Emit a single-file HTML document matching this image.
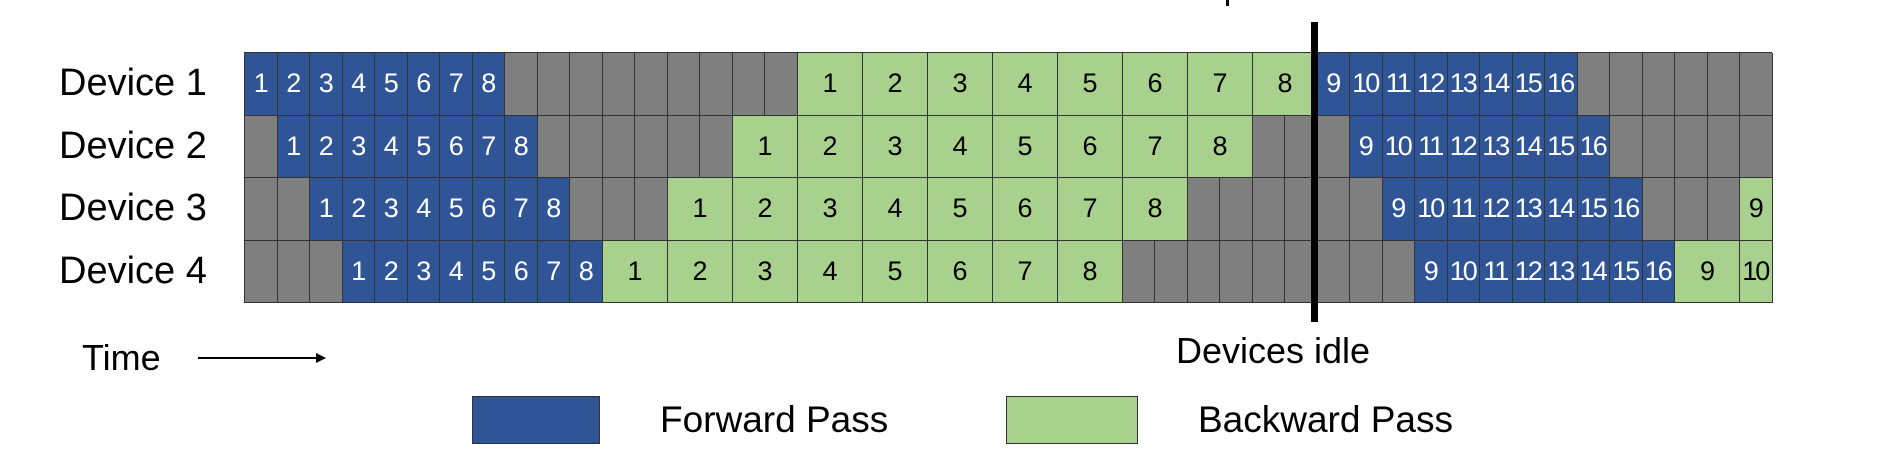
<!DOCTYPE html>
<html><head><meta charset="utf-8"><style>
body{margin:0;width:1882px;height:470px;background:#fff;position:relative;overflow:hidden;font-family:"Liberation Sans",sans-serif}
.grid{position:absolute;left:244px;top:52px;width:1528px;border-left:1px solid #333;border-top:1px solid #333;box-sizing:border-box}
.row{display:flex;height:62.5px}
.row div{box-sizing:border-box;border-right:1px solid #333;border-bottom:1px solid #333;height:62.5px;width:32.5px;flex:none;display:flex;align-items:center;justify-content:center;font-size:27px;letter-spacing:-2px;text-indent:-1px}
.row div::first-line{}
.row .x{background:#7f7f7f}
.row .b{background:#2f5597;color:#fff}
.row .g{background:#a9d18e;color:#000;width:65px}
.row .s{background:#a9d18e;color:#000}
.lbl{position:absolute;left:59px;font-size:38px;line-height:40px}
.t{position:absolute;font-size:36px;line-height:40px;white-space:nowrap}
</style></head><body>
<div class="lbl" style="top:63px">Device 1</div>
<div class="lbl" style="top:126px">Device 2</div>
<div class="lbl" style="top:188px">Device 3</div>
<div class="lbl" style="top:251px">Device 4</div>
<div class="grid">
<div class="row"><div class="b">1</div><div class="b">2</div><div class="b">3</div><div class="b">4</div><div class="b">5</div><div class="b">6</div><div class="b">7</div><div class="b">8</div><div class="x"></div><div class="x"></div><div class="x"></div><div class="x"></div><div class="x"></div><div class="x"></div><div class="x"></div><div class="x"></div><div class="x"></div><div class="g">1</div><div class="g">2</div><div class="g">3</div><div class="g">4</div><div class="g">5</div><div class="g">6</div><div class="g">7</div><div class="g">8</div><div class="b">9</div><div class="b">10</div><div class="b">11</div><div class="b">12</div><div class="b">13</div><div class="b">14</div><div class="b">15</div><div class="b">16</div><div class="x"></div><div class="x"></div><div class="x"></div><div class="x"></div><div class="x"></div><div class="x"></div></div>
<div class="row"><div class="x"></div><div class="b">1</div><div class="b">2</div><div class="b">3</div><div class="b">4</div><div class="b">5</div><div class="b">6</div><div class="b">7</div><div class="b">8</div><div class="x"></div><div class="x"></div><div class="x"></div><div class="x"></div><div class="x"></div><div class="x"></div><div class="g">1</div><div class="g">2</div><div class="g">3</div><div class="g">4</div><div class="g">5</div><div class="g">6</div><div class="g">7</div><div class="g">8</div><div class="x"></div><div class="x"></div><div class="x"></div><div class="b">9</div><div class="b">10</div><div class="b">11</div><div class="b">12</div><div class="b">13</div><div class="b">14</div><div class="b">15</div><div class="b">16</div><div class="x"></div><div class="x"></div><div class="x"></div><div class="x"></div><div class="x"></div></div>
<div class="row"><div class="x"></div><div class="x"></div><div class="b">1</div><div class="b">2</div><div class="b">3</div><div class="b">4</div><div class="b">5</div><div class="b">6</div><div class="b">7</div><div class="b">8</div><div class="x"></div><div class="x"></div><div class="x"></div><div class="g">1</div><div class="g">2</div><div class="g">3</div><div class="g">4</div><div class="g">5</div><div class="g">6</div><div class="g">7</div><div class="g">8</div><div class="x"></div><div class="x"></div><div class="x"></div><div class="x"></div><div class="x"></div><div class="x"></div><div class="b">9</div><div class="b">10</div><div class="b">11</div><div class="b">12</div><div class="b">13</div><div class="b">14</div><div class="b">15</div><div class="b">16</div><div class="x"></div><div class="x"></div><div class="x"></div><div class="s">9</div></div>
<div class="row"><div class="x"></div><div class="x"></div><div class="x"></div><div class="b">1</div><div class="b">2</div><div class="b">3</div><div class="b">4</div><div class="b">5</div><div class="b">6</div><div class="b">7</div><div class="b">8</div><div class="g">1</div><div class="g">2</div><div class="g">3</div><div class="g">4</div><div class="g">5</div><div class="g">6</div><div class="g">7</div><div class="g">8</div><div class="x"></div><div class="x"></div><div class="x"></div><div class="x"></div><div class="x"></div><div class="x"></div><div class="x"></div><div class="x"></div><div class="x"></div><div class="b">9</div><div class="b">10</div><div class="b">11</div><div class="b">12</div><div class="b">13</div><div class="b">14</div><div class="b">15</div><div class="b">16</div><div class="g">9</div><div class="s">10</div></div>
</div>
<div style="position:absolute;left:1311px;top:22px;width:7px;height:300px;background:#000"></div>
<div style="position:absolute;left:1226px;top:0;width:3px;height:6px;background:#000"></div>
<div class="t" style="left:1176px;top:331px">Devices idle</div>
<div class="t" style="left:82px;top:338px">Time</div>
<div style="position:absolute;left:198px;top:357px;width:122px;height:2px;background:#000"></div>
<div style="position:absolute;left:316px;top:353px;width:0;height:0;border-left:10px solid #000;border-top:5px solid transparent;border-bottom:5px solid transparent"></div>
<div style="position:absolute;left:472px;top:396px;width:128px;height:48px;background:#2f5597;border:1px solid #333;box-sizing:border-box"></div>
<div class="t" style="left:660px;top:400px;font-size:37px">Forward Pass</div>
<div style="position:absolute;left:1006px;top:396px;width:132px;height:48px;background:#a9d18e;border:1px solid #333;box-sizing:border-box"></div>
<div class="t" style="left:1198px;top:400px;font-size:37px">Backward Pass</div>
</body></html>
